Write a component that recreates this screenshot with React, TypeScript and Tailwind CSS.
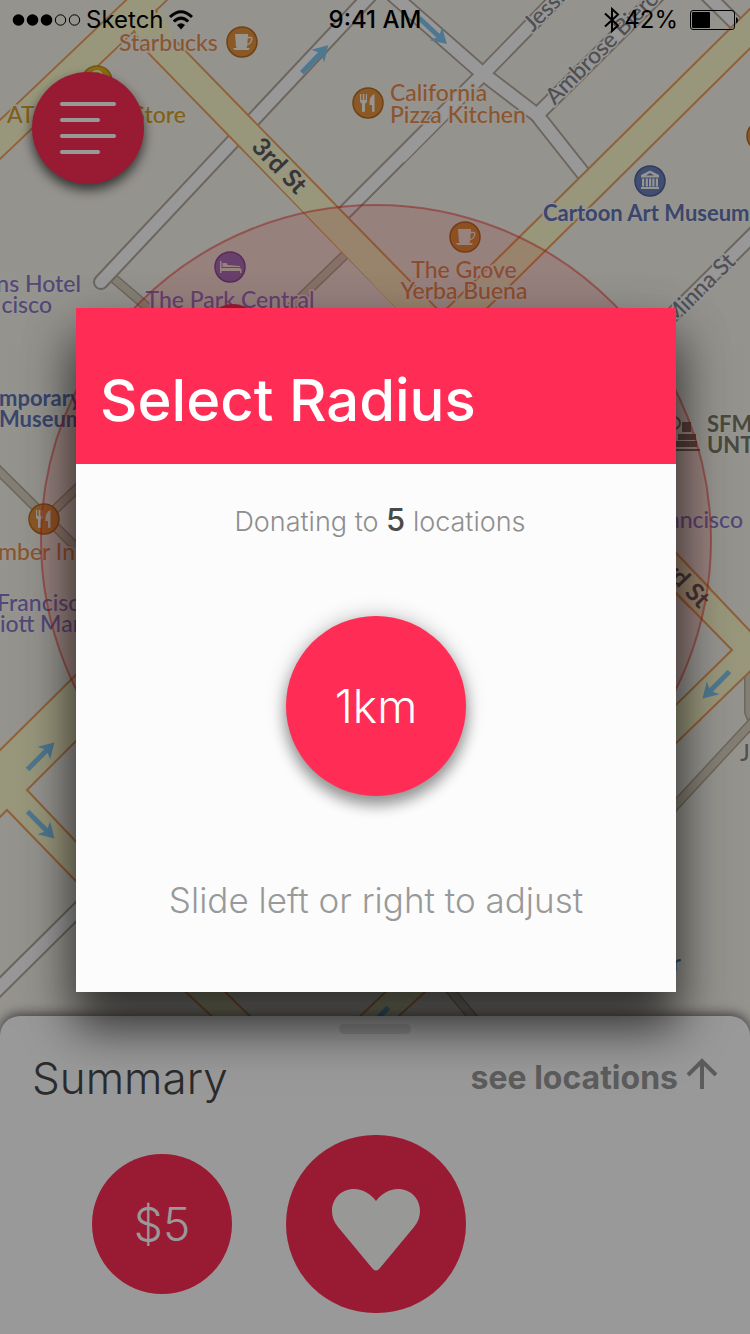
import React from "react";

type Tone = "orange" | "gold" | "violet" | "purple" | "navy" | "street" | "olive";

const toneClass: Record<Tone, string> = {
  orange: "fill-[#e88e4e]",
  gold: "fill-[#d9a11e]",
  violet: "fill-[#8878c8]",
  purple: "fill-[#a374cf]",
  navy: "fill-[#6275b4]",
  street: "fill-[#858589]",
  olive: "fill-[#7c7a68]",
};

type LabelProps = {
  x: number;
  y: number;
  tone: Tone;
  children: string;
  anchor?: "start" | "middle" | "end";
  bold?: boolean;
};

function PlaceLabel({ x, y, tone, children, anchor = "start", bold = false }: LabelProps) {
  return (
    <text
      x={x}
      y={y}
      textAnchor={anchor}
      paintOrder="stroke"
      className={`${toneClass[tone]} ${bold ? "text-[22px] font-bold" : "text-[23px] font-medium"} stroke-[#fbf8f1] stroke-[3px]`}
    >
      {children}
    </text>
  );
}

type StreetLabelProps = {
  x: number;
  y: number;
  angle: number;
  children: string;
  anchor?: "start" | "middle";
  major?: boolean;
};

function StreetLabel({ x, y, angle, children, anchor = "middle", major = false }: StreetLabelProps) {
  return (
    <text
      transform={`translate(${x} ${y}) rotate(${angle})`}
      y={8}
      textAnchor={anchor}
      paintOrder="stroke"
      className={
        major
          ? "fill-[#5d5d62] stroke-[#fffbd2] stroke-[3px] text-[25px] font-bold"
          : "fill-[#858589] stroke-[#fbfbfb] stroke-[3px] text-[23px] font-medium"
      }
    >
      {children}
    </text>
  );
}

function Road({ d, kind }: { d: string; kind: "white" | "yellow" | "tan" }) {
  const casing = {
    white: "stroke-[#b5aa9d] stroke-[16px]",
    yellow: "stroke-[#f0a05e] stroke-[30px]",
    tan: "stroke-[#b5aa9a] stroke-[10px]",
  }[kind];
  const surface = {
    white: "stroke-[#fdfdff] stroke-[12px]",
    yellow: "stroke-[#fdfacd] stroke-[26px]",
    tan: "stroke-[#ddd4c2] stroke-[7px]",
  }[kind];
  const cap = kind === "white" ? "round" : "butt";
  return (
    <g fill="none" strokeLinecap={cap} strokeLinejoin="round">
      <path d={d} className={casing} />
      <path d={d} className={surface} />
    </g>
  );
}

function Surface({ d, kind }: { d: string; kind: "white" | "yellow" }) {
  return (
    <path
      d={d}
      fill="none"
      className={kind === "white" ? "stroke-[#fdfdff] stroke-[12px]" : "stroke-[#fdfacd] stroke-[26px]"}
    />
  );
}

function Arrow({ x, y, angle }: { x: number; y: number; angle: number }) {
  return (
    <path
      transform={`translate(${x} ${y}) rotate(${angle})`}
      d="M-19 -2.500 L7 -2.500 L4 -9 L19 0 L4 9 L7 2.500 L-19 2.500 Z"
      className="fill-[#82c8f0]"
    />
  );
}

function Poi({ x, y, color, children }: { x: number; y: number; color: string; children?: React.ReactNode }) {
  return (
    <g transform={`translate(${x} ${y})`}>
      <circle r="15" className={color} strokeWidth="1.5" />
      {children}
    </g>
  );
}

const ORANGE = "fill-[#e8943e] stroke-[#b96d24]";

function Cup() {
  return (
    <g fill="#fbf8f1">
      <path d="M-7 -8 H6 V-6 L5 5 Q4.800 6 3.500 6 H-4.500 Q-5.800 6 -6 4.500 Z" />
      <path d="M5 -4.500 H8.500 Q10 -4.500 9.800 -3 Q9 2 5 2.500" fill="none" stroke="#fbf8f1" strokeWidth="1.500" />
      <path d="M-9 6 H8 L6.500 8 H-7.500 Z" />
    </g>
  );
}

function Cutlery() {
  return (
    <g fill="#fbf8f1">
      <path d="M-8 -9 H-6.800 V-3 H-5.300 V-9 H-3.700 V-3 H-2.200 V-9 H-1 V-2 Q-1 0 -3 0.600 V8 Q-3 9 -4.500 9 Q-6 9 -6 8 V0.600 Q-8 0 -8 -2 Z" />
      <path d="M6.500 -9 V8 Q6.500 9 5.200 9 Q4 9 4 8 V2 H1.500 Q1 -7 6.500 -9 Z" />
    </g>
  );
}

function CityMap() {
  return (
    <svg
      aria-hidden="true"
      viewBox="0 0 750 1334"
      preserveAspectRatio="xMidYMin slice"
      className="absolute inset-0 h-full w-full bg-[#f9f5ed] font-[Lato,'Open_Sans',sans-serif]"
    >
      <Road kind="tan" d="M112 277 L160 318" />
      <Road kind="tan" d="M347 253 L290 308" />
      <Road kind="tan" d="M-10 462 L90 561" />
      <Road kind="tan" d="M44 520 L90 476" />
      <Road kind="tan" d="M749 670 V712 L754 724" />
      <Road kind="tan" d="M760 714 L660 822" />
      <Road kind="tan" d="M440 978 L480 1026" />

      <Road kind="white" d="M101 282 L375 -10" />
      <Road kind="white" d="M385 -12 L482 73 L537 115 L590 182" />
      <Road kind="white" d="M565 -10 L487 70 L335 222" />
      <Road kind="white" d="M537 115 L665 -12" />
      <Road kind="white" d="M700 -12 L765 52" />
      <Road kind="white" d="M770 218 L650 337" />
      <Road kind="white" d="M-12 999 L100 888" />
      <Surface kind="white" d="M385 -12 L482 73 L537 115 L590 182" />
      <Surface kind="white" d="M565 -10 L487 70 L400 158" />
      <Surface kind="white" d="M537 115 L600 52" />

      <Road kind="yellow" d="M-30 168 L175 -27" />
      <Road kind="yellow" d="M142 12 Q148 34 165 50 L239 126 L700 598" />
      <Road kind="yellow" d="M790 -11 L588 189 L440 335" />
      <Surface kind="yellow" d="M-30 168 L175 -27" />
      <Surface kind="yellow" d="M150 16 L165 50 L239 126 L440 335" />
      <g className="fill-[#fdfacd] stroke-[#f0a05e] stroke-2">
        <path d="M640 515 L770 652 L640 778 V740 L732 650 L640 556" />
        <path d="M-10 760 L100 651 V717 L27 790 L100 867 V906 L7 810 L-10 827 Z" />
        <path d="M175 982 L222 1026 H260 L215 982 Z" />
        <path d="M350 1026 L398 980 H438 L388 1026 Z" />
      </g>

      <Arrow x={315} y={59} angle={-46} />
      <Arrow x={433} y={31} angle={43} />
      <Arrow x={41} y={756} angle={-45} />
      <Arrow x={41} y={825} angle={45} />
      <Arrow x={716} y={685} angle={135} />
      <Arrow x={375} y={1021} angle={135} />

      <StreetLabel x={279} y={166} angle={46} major>3rd St</StreetLabel>
      <StreetLabel x={682} y={580} angle={46} major>3rd St</StreetLabel>
      <StreetLabel x={699} y={289} angle={-45}>Minna St</StreetLabel>
      <StreetLabel x={527} y={27} angle={-45} anchor="start">Jessie St</StreetLabel>
      <StreetLabel x={549} y={100} angle={-45} anchor="start">Ambrose Bierce St</StreetLabel>

      <Poi x={242} y={42} color={ORANGE}><Cup /></Poi>
      <Poi x={368} y={103} color={ORANGE}><Cutlery /></Poi>
      <Poi x={465} y={237} color={ORANGE}><Cup /></Poi>
      <Poi x={762} y={136} color={ORANGE} />
      <Poi x={97} y={81} color="fill-[#e6b81c] stroke-[#b89414]">
        <path d="M-5 -4 Q-5 -10 0 -10 Q5 -10 5 -4" fill="none" stroke="#fbf8f1" strokeWidth="2" />
      </Poi>
      <Poi x={650} y={181} color="fill-[#6d82bd] stroke-[#50639c]">
        <path
          fillRule="evenodd"
          d="M0 -10.500 L9 -6 V-3.500 H-9 V-6 Z M0 -8 L-4 -5.500 H4 Z M-8 -2.500 H-5.800 V5.500 H-8 Z M-4.300 -2.500 H-2.100 V5.500 H-4.300 Z M-1 -2.500 H1.200 V5.500 H-1 Z M2.300 -2.500 H4.500 V5.500 H2.300 Z M5.800 -2.500 H8 V5.500 H5.800 Z M-9 6 H9 V8 H-9 Z"
          fill="#fbf8f1"
        />
      </Poi>
      <Poi x={230} y={267} color="fill-[#a274cc] stroke-[#7d52a6]">
        <path d="M-10 -6 H-8.500 V1 H9.500 Q11.500 1 11.500 3 V6 H10 V4 H-8.500 V6 H-10 Z M-7.500 -4 H-4 Q-2.500 -4 -2.500 -2 L10 -1 V0 H-7.500 Z" fill="#fbf8f1" />
      </Poi>
      <Poi x={44} y={519} color={ORANGE}><Cutlery /></Poi>

      <g className="fill-[#7a7264]">
        <path d="M682 422 H691 V432 H682 Z M678 434 H696 V440 H678 Z M672 441 H697 V447 H672 Z M670 449 H700 V451 H670 Z" />
        <circle cx="674" cy="423" r="6" fill="none" stroke="#7a7264" strokeWidth="2" />
      </g>

      <PlaceLabel x={119} y={51} tone="orange">Starbucks</PlaceLabel>
      <PlaceLabel x={7} y={123} tone="gold">AT&amp;T</PlaceLabel>
      <PlaceLabel x={186} y={123} tone="gold" anchor="end">Store</PlaceLabel>
      <PlaceLabel x={390} y={101} tone="orange">California</PlaceLabel>
      <PlaceLabel x={390} y={123} tone="orange">Pizza Kitchen</PlaceLabel>
      <PlaceLabel x={464} y={278} tone="orange" anchor="middle">The Grove</PlaceLabel>
      <PlaceLabel x={464} y={299} tone="orange" anchor="middle">Yerba Buena</PlaceLabel>
      <PlaceLabel x={543} y={221} tone="navy" bold>Cartoon Art Museum</PlaceLabel>
      <PlaceLabel x={81} y={292} tone="violet" anchor="end">ns Hotel</PlaceLabel>
      <PlaceLabel x={52} y={313} tone="violet" anchor="end">cisco</PlaceLabel>
      <PlaceLabel x={230} y={308} tone="purple" anchor="middle">The Park Central</PlaceLabel>
      <PlaceLabel x={-1} y={406} tone="navy" bold>mporary</PlaceLabel>
      <PlaceLabel x={-1} y={427} tone="navy" bold>Museum</PlaceLabel>
      <PlaceLabel x={-2} y={560} tone="orange">mber Inn</PlaceLabel>
      <PlaceLabel x={-3} y={611} tone="violet">Francisco</PlaceLabel>
      <PlaceLabel x={0} y={632} tone="violet">iott Marquis</PlaceLabel>
      <PlaceLabel x={707} y={432} tone="olive" bold>SFMOMA</PlaceLabel>
      <PlaceLabel x={707} y={453} tone="olive" bold>UNTIL</PlaceLabel>
      <PlaceLabel x={743} y={528} tone="violet" anchor="end">Francisco</PlaceLabel>
      <PlaceLabel x={740} y={761} tone="street">J</PlaceLabel>
      <PlaceLabel x={681} y={971} tone="navy" anchor="end">r</PlaceLabel>

      <circle cx="376" cy="540" r="335" className="fill-[#ff2d2d]/15 stroke-[#f0302c]/50 stroke-2" />
      <circle cx="233" cy="333" r="29" className="fill-[#ff2d55]" />
    </svg>
  );
}

function StatusBar() {
  return (
    <div className="relative z-20 grid h-10 grid-cols-[1fr_auto_1fr] items-center px-3 text-[24px] leading-10 text-black">
      <div className="flex items-center gap-1">
        <svg aria-hidden="true" width="70" height="14" viewBox="0 0 70 14">
          <circle cx="6.500" cy="7" r="5.800" />
          <circle cx="20.500" cy="7" r="5.800" />
          <circle cx="34.500" cy="7" r="5.800" />
          <circle cx="48.500" cy="7" r="5.200" fill="none" stroke="black" strokeWidth="1" />
          <circle cx="62.500" cy="7" r="5.200" fill="none" stroke="black" strokeWidth="1" />
        </svg>
        <span>Sketch</span>
        <svg aria-hidden="true" width="26" height="20" viewBox="0 0 26 20" fill="none" stroke="black" strokeWidth="3">
          <path d="M2 7 Q13 -3.500 24 7" />
          <path d="M5.800 11.500 Q13 4.700 20.200 11.500" />
          <path d="M13 19.500 L9 15 Q13 11.500 17 15 Z" fill="black" stroke="none" />
        </svg>
      </div>
      <span className="font-medium">9:41 AM</span>
      <div className="flex items-center justify-end gap-3">
        <div className="flex items-center gap-1">
          <svg aria-hidden="true" width="16" height="26" viewBox="0 0 16 26" fill="none" stroke="black" strokeWidth="2">
            <path d="M1 6.500 L14 18.500 L8 24 V2 L14 7.500 L1 19.500" />
          </svg>
          <span>42%</span>
        </div>
        <svg aria-hidden="true" width="48" height="20" viewBox="0 0 48 20">
          <rect x="0.500" y="0.500" width="44" height="19" rx="2.500" fill="none" stroke="black" />
          <rect x="2" y="2" width="18" height="16" rx="1" />
          <path d="M46 7 Q48 8 48 10 Q48 12.500 46 13.500 Z" />
        </svg>
      </div>
    </div>
  );
}

function MenuButton() {
  return (
    <button
      type="button"
      aria-label="Menu"
      className="flex size-28 flex-col items-start justify-center gap-3 rounded-full bg-[#ff2d55] pl-7 shadow-[0_6px_12px_rgba(0,0,0,0.65)]"
    >
      <span className="h-1 w-14 rounded-full bg-white" />
      <span className="h-1 w-10 rounded-full bg-white" />
      <span className="h-1 w-14 rounded-full bg-white" />
      <span className="h-1 w-10 rounded-full bg-white" />
    </button>
  );
}

function SummarySheet() {
  return (
    <section className="relative mt-auto rounded-t-[20px] bg-white pt-2 pb-[21px] shadow-[0_-2px_12px_rgba(0,0,0,0.6)]">
      <div className="mx-auto h-[10px] w-[72px] rounded-full bg-[#e4e4e4]" />
      <div className="flex items-center justify-between px-8 pt-3">
        <h2 className="text-[44px] leading-[64px] font-light text-[#484848]">Summary</h2>
        <button type="button" className="flex items-start gap-2 text-[32px] leading-10 font-bold text-[#999999]">
          see locations
          <svg aria-hidden="true" width="32" height="32" viewBox="0 0 32 32" fill="none" stroke="currentColor" strokeWidth="4">
            <path d="M16 31 V3 M2 17 L16 3 L30 17" />
          </svg>
        </button>
      </div>
      <div className="flex items-center gap-[54px] pt-[25px] pl-[92px]">
        <button
          type="button"
          className="size-[140px] rounded-full bg-[#ff2d55] text-[46px] leading-none font-light text-white"
        >
          $5
        </button>
        <button
          type="button"
          aria-label="Donate"
          className="flex h-[178px] w-[180px] items-center justify-center rounded-full bg-[#ff2d55]"
        >
          <svg aria-hidden="true" width="88" height="82" viewBox="0 0 88 82" className="mt-3 fill-[#fefefa]">
            <path d="M44 12 C39 5 31 0 22 0 C9 0 0 10 0 22 C0 28 2 33 6 38 L40 79 Q44 84 48 79 L82 38 C86 33 88 28 88 22 C88 10 79 0 66 0 C57 0 49 5 44 12 Z" />
          </svg>
        </button>
      </div>
    </section>
  );
}

function RadiusDialog() {
  return (
    <div
      role="dialog"
      aria-labelledby="radius-title"
      className="w-full bg-[#fcfcfc] pb-[68px] text-center shadow-[0_36px_45px_rgba(0,0,0,0.55),0_20px_50px_rgba(0,0,0,0.3)]"
    >
      <header className="bg-[#ff2d55] px-6 pt-14 pb-7 text-left">
        <h1 id="radius-title" className="text-[58px] leading-[72px] font-medium text-white">
          Select Radius
        </h1>
      </header>
      <p className="pt-9 pl-2 text-[27px] leading-10 font-light text-[#8e8e8e]">
        Donating to <strong className="text-[31px] font-medium text-[#4a4a4a]">5</strong> locations
      </p>
      <button
        type="button"
        className="mt-[74px] size-[180px] rounded-full bg-[#ff2d55] text-[46px] leading-none font-light text-white shadow-[0_10px_14px_rgba(0,0,0,0.32),0_0_20px_rgba(0,0,0,0.25)]"
      >
        1km
      </button>
      <p className="pt-20 text-[35px] leading-12 font-light text-[#999999]">Slide left or right to adjust</p>
    </div>
  );
}

export default function App() {
  return (
    <div className="relative flex min-h-screen flex-col overflow-hidden font-[Inter,sans-serif]">
      <CityMap />
      <StatusBar />
      <div className="relative px-8 pt-8">
        <MenuButton />
      </div>
      <SummarySheet />
      <div className="absolute inset-0 z-10 bg-black/40 pt-[308px] pr-[74px] pl-19">
        <RadiusDialog />
      </div>
    </div>
  );
}
